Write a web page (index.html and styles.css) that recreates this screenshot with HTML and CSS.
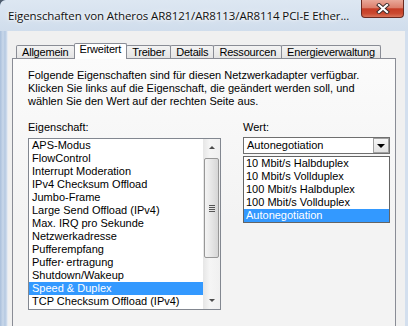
FILE: index.html
```html
<!DOCTYPE html>
<html lang="de">
<head>
  <meta charset="UTF-8">
  <meta name="viewport" content="width=device-width, initial-scale=1.0">
  <title>Eigenschaften</title>
  <link rel="stylesheet" href="styles.css">
</head>
<body>
  <div class="window">
    <div class="titlebar">
      <span class="title">Eigenschaften von Atheros AR8121/AR8113/AR8114 PCI-E Ether...</span>
      <div class="close">
        <svg width="14" height="11" viewBox="0 0 14 11">
          <path d="M3 2 L11 9 M11 2 L3 9" stroke="#3b2a2a" stroke-width="4" stroke-linecap="square" fill="none"/>
          <path d="M3 2 L11 9 M11 2 L3 9" stroke="#ffffff" stroke-width="2.2" stroke-linecap="square" fill="none"/>
        </svg>
      </div>
    </div>
    <div class="client">
      <div class="tabs">
        <div class="tab">Allgemein</div>
        <div class="tab active">Erweitert</div>
        <div class="tab">Treiber</div>
        <div class="tab">Details</div>
        <div class="tab">Ressourcen</div>
        <div class="tab">Energieverwaltung</div>
      </div>
      <div class="panel">
        <p class="intro">
          Folgende Eigenschaften sind für diesen Netzwerkadapter verfügbar.<br>
          Klicken Sie links auf die Eigenschaft, die geändert werden soll, und<br>
          wählen Sie den Wert auf der rechten Seite aus.
        </p>
        <div class="columns">
          <div class="col-left">
            <div class="label">Eigenschaft:</div>
            <div class="listbox">
              <ul class="items">
                <li>APS-Modus</li>
                <li>FlowControl</li>
                <li>Interrupt Moderation</li>
                <li>IPv4 Checksum Offload</li>
                <li>Jumbo-Frame</li>
                <li>Large Send Offload (IPv4)</li>
                <li>Max. IRQ pro Sekunde</li>
                <li>Netzwerkadresse</li>
                <li>Pufferempfang</li>
                <li>Puffer<span class="bad-char">&#x25AA;</span> ertragung</li>
                <li>Shutdown/Wakeup</li>
                <li class="selected">Speed &amp; Duplex</li>
                <li>TCP Checksum Offload (IPv4)</li>
              </ul>
              <div class="scrollbar">
                <div class="sb-btn"><span class="tri-up"></span></div>
                <div class="sb-track">
                  <div class="sb-thumb"><span class="grip"></span></div>
                </div>
                <div class="sb-btn"><span class="tri-down"></span></div>
              </div>
            </div>
          </div>
          <div class="col-right">
            <div class="label">Wert:</div>
            <div class="combo">
              <span class="combo-text">Autonegotiation</span>
              <span class="combo-btn"><span class="tri-down"></span></span>
              <ul class="dropdown">
                <li>10 Mbit/s Halbduplex</li>
                <li>10 Mbit/s Vollduplex</li>
                <li>100 Mbit/s Halbduplex</li>
                <li>100 Mbit/s Vollduplex</li>
                <li class="selected">Autonegotiation</li>
              </ul>
            </div>
          </div>
        </div>
      </div>
    </div>
  </div>
</body>
</html>
```

FILE: styles.css
```css
body {
  margin: 0;
  background: #4f5d6e;
  font-family: "Liberation Sans", Arial, sans-serif;
  overflow: hidden;
}

.window {
  width: 408px;
  height: 326px;
  box-sizing: border-box;
  display: flex;
  flex-direction: column;
  padding: 0 3px 0 7px;
  background: linear-gradient(to right, #a9bfdb 0, #c9d8ea 3px, #b4c8e1 5px, #d3dfee 7px, #d3dfee 100%);
  border-top-left-radius: 6px;
  overflow: hidden;
}

.titlebar {
  height: 31px;
  flex: none;
  display: flex;
  align-items: flex-start;
  margin: 0 -3px 0 -7px;
  padding-left: 8px;
  background: linear-gradient(#dde7f2, #d0ddec);
  border-top-left-radius: 6px;
}

.title {
  font-family: "Open Sans", sans-serif;
  font-size: 11.5px;
  line-height: 14px;
  padding-top: 9px;
  color: #111;
  text-shadow: 0 0 6px #fff, 0 0 3px #fff;
  white-space: nowrap;
  letter-spacing: -0.1px;
}

.close {
  margin-left: auto;
  margin-right: 4px;
  width: 43px;
  height: 18px;
  box-sizing: border-box;
  border: 1px solid #6b2a20;
  border-top: none;
  border-radius: 0 0 4px 4px;
  background: linear-gradient(#e9a899 0, #dc7f6c 45%, #c53c25 52%, #cb4a30 80%, #d9745a 100%);
  display: flex;
  justify-content: center;
  align-items: center;
}

.client {
  flex: 1;
  display: flex;
  flex-direction: column;
  background: #f0f0f0;
  border-left: 1px solid #e4eaf2;
  padding: 12px 9px 0 4px;
}

.tabs {
  display: flex;
  align-items: flex-end;
  height: 15px;
  padding-left: 5px;
  font-size: 11px;
  letter-spacing: -0.2px;
}

.tab {
  height: 12px;
  line-height: 12px;
  min-width: 32px;
  padding: 0 5px;
  text-align: center;
  border: 1px solid #898c95;
  border-bottom: none;
  margin-left: -1px;
  border-radius: 2px 2px 0 0;
  background: linear-gradient(#f3f3f3, #e4e4e4);
  color: #000;
  white-space: nowrap;
}

.tab.active {
  line-height: 11px;
  box-sizing: border-box;
  height: 16px;
  padding: 0 5px;
  margin-bottom: -1px;
  margin-right: -1px;
  background: #fff;
  position: relative;
  z-index: 1;
}

.tab.active + .tab {
  margin-left: 0;
}

.panel {
  flex: 1;
  border: 1px solid #898c95;
  border-bottom: none;
  background: linear-gradient(#fbfbfb, #f3f3f3 60%);
  padding: 10px 5px 0 15px;
  font-size: 11px;
}

.intro {
  margin: 0;
  line-height: 13px;
}

.columns {
  display: flex;
  gap: 22px;
  margin-top: 13px;
}

.col-left {
  width: 193px;
}

.col-right {
  width: 147px;
}

.label {
  line-height: 13px;
  margin-bottom: 4px;
}

.col-right .label {
  margin-bottom: 3px;
}

.listbox {
  height: 172px;
  box-sizing: border-box;
  border: 1px solid #828790;
  background: #fff;
  display: flex;
}

ul {
  list-style: none;
  margin: 0;
  padding: 0;
}

.items {
  flex: 1;
}

.items li,
.dropdown li {
  height: 13px;
  line-height: 13px;
  padding-left: 3px;
  white-space: nowrap;
  color: #000;
}

li.selected {
  background: #3399ff;
  color: #fff;
}

.bad-char {
  font-size: 6px;
  vertical-align: 2px;
}

.scrollbar {
  width: 17px;
  display: flex;
  flex-direction: column;
  background: linear-gradient(to right, #e6e6e6, #f5f5f5 40%, #f0f0f0);
}

.sb-btn {
  height: 17px;
  display: flex;
  justify-content: center;
  align-items: center;
}

.sb-track {
  flex: 1;
  padding-top: 2px;
}

.sb-thumb {
  height: 100px;
  box-sizing: border-box;
  margin: 0 1px;
  border: 1px solid #979797;
  border-radius: 2px;
  background: linear-gradient(to right, #f4f4f4, #e6e6e6 50%, #d6d6d6);
  display: flex;
  justify-content: center;
  align-items: center;
}

.grip {
  width: 6px;
  height: 7px;
  background: repeating-linear-gradient(#555 0, #555 1px, transparent 1px, transparent 2px);
}

.tri-up {
  width: 0;
  height: 0;
  border-left: 3px solid transparent;
  border-right: 3px solid transparent;
  border-bottom: 3px solid #4d4d4d;
}

.tri-down {
  width: 0;
  height: 0;
  border-left: 3px solid transparent;
  border-right: 3px solid transparent;
  border-top: 3px solid #4d4d4d;
}

.combo {
  position: relative;
  height: 17px;
  box-sizing: border-box;
  border: 1px solid #6f6f6f;
  background: #fff;
  display: flex;
  align-items: center;
}

.combo-text {
  flex: 1;
  padding-left: 3px;
  line-height: 15px;
}

.combo-btn {
  width: 16px;
  height: 15px;
  box-sizing: border-box;
  border: 1px solid #a0a0a0;
  background: linear-gradient(#f6f6f6, #e2e2e2);
  display: flex;
  justify-content: center;
  align-items: center;
}

.combo-btn .tri-down {
  border-left-width: 4px;
  border-right-width: 4px;
  border-top: 4px solid #000;
}

.dropdown {
  position: absolute;
  left: -1px;
  right: -1px;
  top: 18px;
  border: 1px solid #646464;
  background: #fff;
  z-index: 2;
}

.dropdown li {
  padding-left: 2px;
}
```
